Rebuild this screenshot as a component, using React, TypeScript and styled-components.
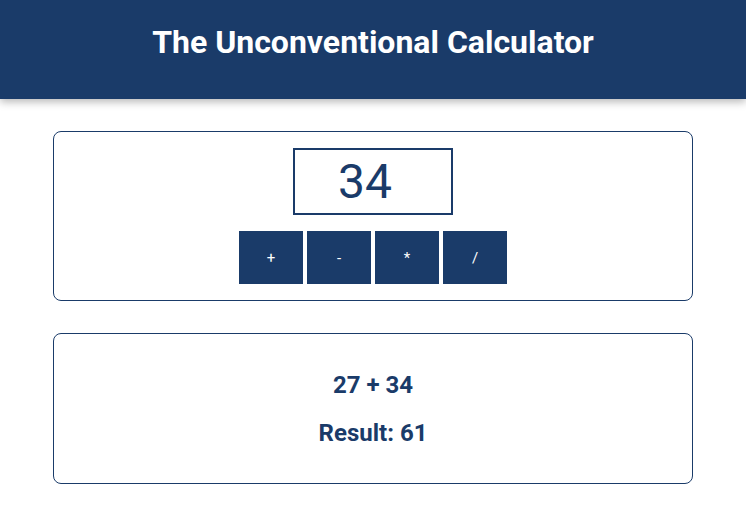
import React, { useState } from "react";
import styled, { createGlobalStyle } from "styled-components";

const NAVY = "#1a3b69";

const GlobalStyle = createGlobalStyle`
  body {
    margin: 0;
    background: #ffffff;
    font-family: Roboto, "Liberation Sans", Arial, sans-serif;
  }
`;

const Header = styled.header`
  height: 99px;
  box-sizing: border-box;
  padding-top: 23px;
  background: ${NAVY};
  box-shadow: 0 3px 8px rgba(0, 0, 0, 0.28);
  text-align: center;
`;

const Title = styled.h1`
  margin: 0;
  color: #ffffff;
  font-size: 32px;
  line-height: 38px;
  font-weight: 700;
`;

const Main = styled.main`
  max-width: 640px;
  margin: 32px auto 0;
  display: flex;
  flex-direction: column;
  gap: 32px;
`;

const Card = styled.section<{ $top: number; $bottom: number; $gap: number }>`
  border: 1px solid ${NAVY};
  border-radius: 8px;
  padding: ${(p) => p.$top}px 16px ${(p) => p.$bottom}px;
  display: flex;
  flex-direction: column;
  align-items: center;
  gap: ${(p) => p.$gap}px;
`;

const NumberField = styled.input`
  width: 160px;
  height: 67px;
  box-sizing: border-box;
  border: 2px solid ${NAVY};
  border-radius: 0;
  padding: 0 16px 0 0;
  outline: none;
  color: ${NAVY};
  font-family: Roboto, "Liberation Sans", Arial, sans-serif;
  font-size: 48px;
  font-weight: 400;
  text-align: center;
`;

const ButtonRow = styled.div`
  display: flex;
  gap: 4px;
`;

const OpButton = styled.button`
  width: 64px;
  height: 53px;
  border: none;
  border-radius: 0;
  background: ${NAVY};
  color: #ffffff;
  font-family: Roboto, "Liberation Sans", Arial, sans-serif;
  font-size: 15px;
  cursor: pointer;
`;

const Line = styled.h2`
  margin: 0;
  color: ${NAVY};
  font-size: 24px;
  line-height: 28px;
  font-weight: 700;
`;

const ops = ["+", "-", "*", "/"];

export default function App() {
  const [value, setValue] = useState("34");
  const previous = 27;
  const current = Number(value) || 0;

  return (
    <>
      <GlobalStyle />
      <Header>
        <Title>The Unconventional Calculator</Title>
      </Header>
      <Main>
        <Card $top={16} $bottom={16} $gap={16}>
          <NumberField
            type="text"
            value={value}
            onChange={(e) => setValue(e.target.value)}
          />
          <ButtonRow>
            {ops.map((op) => (
              <OpButton key={op}>{op}</OpButton>
            ))}
          </ButtonRow>
        </Card>
        <Card $top={37} $bottom={36} $gap={20}>
          <Line>
            {previous} + {current}
          </Line>
          <Line>Result: {previous + current}</Line>
        </Card>
      </Main>
    </>
  );
}
